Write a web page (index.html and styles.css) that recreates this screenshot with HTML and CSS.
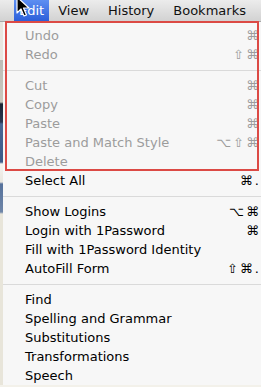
FILE: index.html
```html
<!DOCTYPE html>
<html lang="en">
<head>
  <meta charset="UTF-8">
  <title>Edit menu</title>
  <link rel="stylesheet" href="styles.css">
</head>
<body>

<div class="menubar">
  <span class="mb-item active">Edit</span>
  <span class="mb-item">View</span>
  <span class="mb-item">History</span>
  <span class="mb-item">Bookmarks</span>
</div>

<svg class="cursor" width="14" height="22" viewBox="0 0 14 22">
  <path d="M1 1 L1 17 L5 13 L8 20 L10.5 19 L7.5 12 L13 12 Z" fill="#000" stroke="#fff" stroke-width="1.2" stroke-linejoin="round"/>
</svg>

<div class="page">
  <div class="menu">
    <div class="group marked">
      <div class="row off"><span>Undo</span><span class="keys">⌘</span></div>
      <div class="row off"><span>Redo</span><span class="keys">⇧⌘</span></div>
      <div class="sep"></div>
      <div class="row off"><span>Cut</span><span class="keys">⌘</span></div>
      <div class="row off"><span>Copy</span><span class="keys">⌘</span></div>
      <div class="row off"><span>Paste</span><span class="keys">⌘</span></div>
      <div class="row off"><span>Paste and Match Style</span><span class="keys">⌥⇧⌘</span></div>
      <div class="row off"><span>Delete</span><span class="keys"></span></div>
    </div>
    <div class="row"><span>Select All</span><span class="keys">⌘.</span></div>
    <div class="sep"></div>
    <div class="row"><span>Show Logins</span><span class="keys">⌥⌘</span></div>
    <div class="row"><span>Login with 1Password</span><span class="keys">⌘</span></div>
    <div class="row"><span>Fill with 1Password Identity</span><span class="keys"></span></div>
    <div class="row"><span>AutoFill Form</span><span class="keys">⇧⌘.</span></div>
    <div class="sep"></div>
    <div class="row"><span>Find</span><span class="keys"></span></div>
    <div class="row"><span>Spelling and Grammar</span><span class="keys"></span></div>
    <div class="row"><span>Substitutions</span><span class="keys"></span></div>
    <div class="row"><span>Transformations</span><span class="keys"></span></div>
    <div class="row"><span>Speech</span><span class="keys"></span></div>
  </div>
</div>

</body>
</html>
```

FILE: styles.css
```css
body {
  margin: 0;
  width: 261px;
  height: 387px;
  overflow: hidden;
  position: relative;
  font-family: "DejaVu Sans", sans-serif;
  font-size: 13px;
  background: #f3f1ea;
}
.menubar {
  height: 21px;
  display: flex;
  align-items: stretch;
  padding-left: 14px;
  background: linear-gradient(#ececec, #d2d2d2);
  border-bottom: 1px solid #a8a8a8;
  color: #111;
}
.mb-item {
  display: flex;
  align-items: center;
  padding: 0 10px 0 9px;
  white-space: nowrap;
}
.mb-item.active {
  padding: 0 5px 0 5px;
  background: linear-gradient(#5e8ff2, #2c5fd9);
  color: #fff;
}
.cursor {
  position: absolute;
  left: 16px;
  top: -4px;
}
.page {
  display: flex;
  background: linear-gradient(#e8e6df 0, #e8e6df 38px, #bdbdb7 38px, #c9c6bb 80px, #1c2433 82px, #2a3650 100px, #4a6794 102px, #3d5a88 140px, #f4f2ee 142px, #e9e6df 160px, #56729c 162px, #6f86a8 190px, #e8e5da 192px);
  padding-left: 3px;
}
.menu {
  width: 280px;
  flex: none;
  background: #f7f7f7;
}
.group {
  padding-top: 4px;
}
.marked {
  position: relative;
}
.marked::after {
  content: "";
  position: absolute;
  left: 2px;
  right: 24px;
  top: -1px;
  bottom: 0;
  border: 2px solid #dc4a45;
}
.row {
  display: flex;
  justify-content: space-between;
  height: 19px;
  align-items: center;
  padding: 0 24px 0 22px;
  color: #000;
  white-space: nowrap;
}
.row.off {
  color: #9c9c9c;
}
.keys {
  letter-spacing: 2px;
  margin-right: -2px;
}
.sep {
  height: 12px;
  display: flex;
  align-items: center;
}
.sep::before {
  content: "";
  flex: 1;
  height: 1px;
  background: #dadada;
}
```
